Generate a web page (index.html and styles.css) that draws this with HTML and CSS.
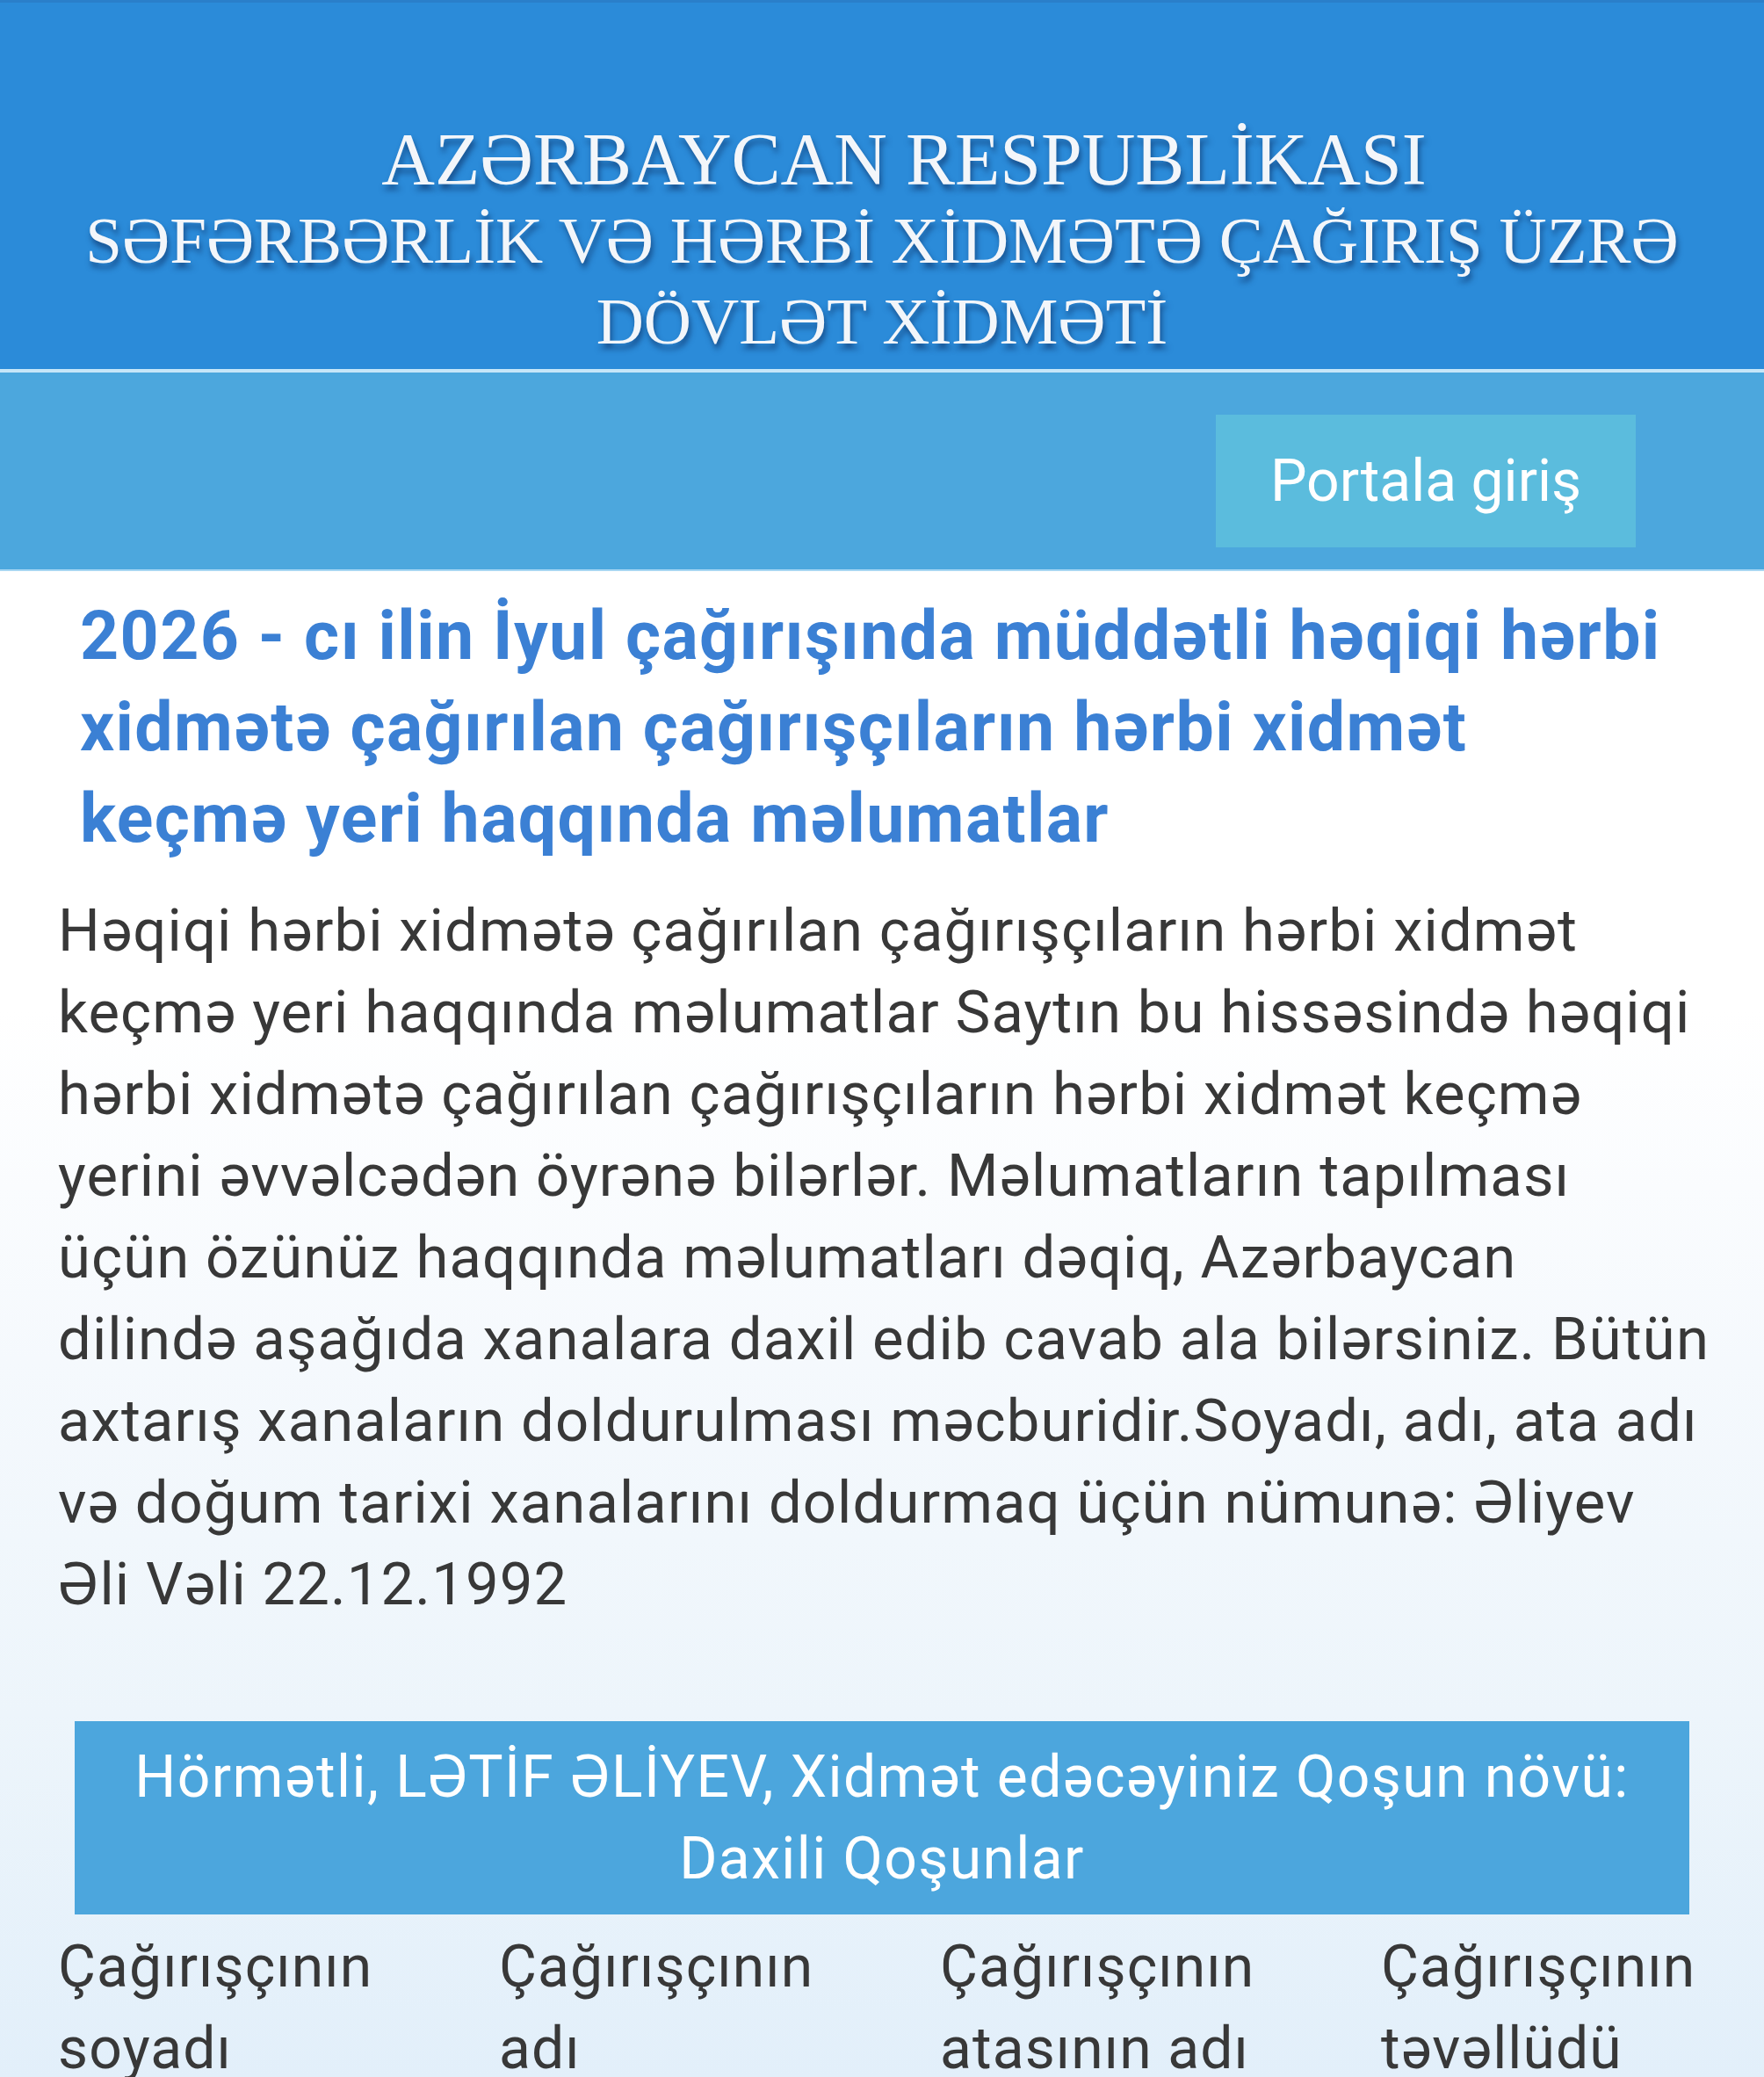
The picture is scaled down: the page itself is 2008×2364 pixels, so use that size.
FILE: index.html
```html
<!DOCTYPE html>
<html lang="az">
<head>
<meta charset="utf-8">
<title>Səfərbərlik və Hərbi Xidmətə Çağırış üzrə Dövlət Xidməti</title>
<link rel="stylesheet" href="styles.css">
</head>
<body>
<div class="page">
  <header class="masthead">
    <h1 class="org-title">
      <span class="org-line org-line-main">AZƏRBAYCAN RESPUBLİKASI</span>
      <span class="org-line">SƏFƏRBƏRLİK VƏ HƏRBİ XİDMƏTƏ ÇAĞIRIŞ ÜZRƏ</span>
      <span class="org-line">DÖVLƏT XİDMƏTİ</span>
    </h1>
  </header>
  <nav class="navbar">
    <a class="portal-btn" href="#">Portala giriş</a>
  </nav>
  <main class="content">
    <h2 class="page-title">2026 - cı ilin İyul çağırışında müddətli həqiqi hərbi xidmətə çağırılan çağırışçıların hərbi xidmət keçmə yeri haqqında məlumatlar</h2>
    <p class="intro">Həqiqi hərbi xidmətə çağırılan çağırışçıların hərbi xidmət keçmə yeri haqqında məlumatlar Saytın bu hissəsində həqiqi hərbi xidmətə çağırılan çağırışçıların hərbi xidmət keçmə yerini əvvəlcədən öyrənə bilərlər. Məlumatların tapılması üçün özünüz haqqında məlumatları dəqiq, Azərbaycan dilində aşağıda xanalara daxil edib cavab ala bilərsiniz. Bütün axtarış xanaların doldurulması məcburidir.Soyadı, adı, ata adı və doğum tarixi xanalarını doldurmaq üçün nümunə: Əliyev Əli Vəli 22.12.1992</p>
    <div class="result-banner">Hörmətli, LƏTİF ƏLİYEV, Xidmət edəcəyiniz Qoşun növü: Daxili Qoşunlar</div>
    <div class="fields">
      <div class="field-label">Çağırışçının soyadı</div>
      <div class="field-label">Çağırışçının adı</div>
      <div class="field-label">Çağırışçının atasının adı</div>
      <div class="field-label">Çağırışçının təvəllüdü</div>
    </div>
  </main>
</div>
</body>
</html>
```

FILE: styles.css
```css
* {
  box-sizing: border-box;
}

html, body {
  margin: 0;
  padding: 0;
}

body {
  font-family: Roboto, "Open Sans", "Liberation Sans", sans-serif;
  color: #383838;
  background: #ffffff;
}

.page {
  width: 2008px;
  min-height: 2364px;
  overflow: hidden;
  background: linear-gradient(to bottom, #ffffff 0, #ffffff 1150px, #f5f9fd 1550px, #edf5fb 1950px, #e2effa 2364px);
}

.masthead {
  height: 424px;
  background: #2b8bd9;
  border-top: 3px solid #2a7fca;
  border-bottom: 4px solid #c6e6f8;
  padding-top: 133px;
}

.org-title {
  margin: 0;
  font-family: "Liberation Serif", "DejaVu Serif", serif;
  font-weight: normal;
  text-align: center;
  color: #f3f6fa;
  text-shadow: 2px 6px 6px rgba(10, 40, 90, 0.6);
}

.org-line {
  display: block;
  font-size: 75px;
  line-height: 92px;
}

.org-line-main {
  font-size: 84px;
  padding-left: 50px;
}

.navbar {
  height: 226px;
  background: #4ca7dd;
  border-bottom: 2px solid #a8d7f2;
  display: flex;
  justify-content: flex-end;
  align-items: flex-start;
  padding: 48px 146px 0 0;
}

.portal-btn {
  display: flex;
  align-items: center;
  justify-content: center;
  width: 478px;
  height: 151px;
  background: #5bbcdd;
  color: #ffffff;
  text-decoration: none;
  font-size: 66px;
}

.content {
  padding: 22px 60px 0 66px;
}

.page-title {
  margin: 0 46px 29px 25px;
  font-size: 77px;
  line-height: 104px;
  font-weight: bold;
  letter-spacing: 1.4px;
  color: #3b80d4;
}

.intro {
  margin: 0 0 109px 0;
  font-size: 67px;
  line-height: 93px;
  letter-spacing: 1.1px;
}

.result-banner {
  margin: 0 25px 0 19px;
  background: #4ca6dd;
  color: #ffffff;
  text-align: center;
  font-size: 66px;
  line-height: 93px;
  letter-spacing: 1.4px;
  padding: 17px 40px;
}

.fields {
  display: grid;
  grid-template-columns: repeat(4, 502px);
  margin-top: 13px;
}

.field-label {
  font-size: 66px;
  line-height: 93px;
  letter-spacing: 1.1px;
  padding-right: 60px;
}
```
